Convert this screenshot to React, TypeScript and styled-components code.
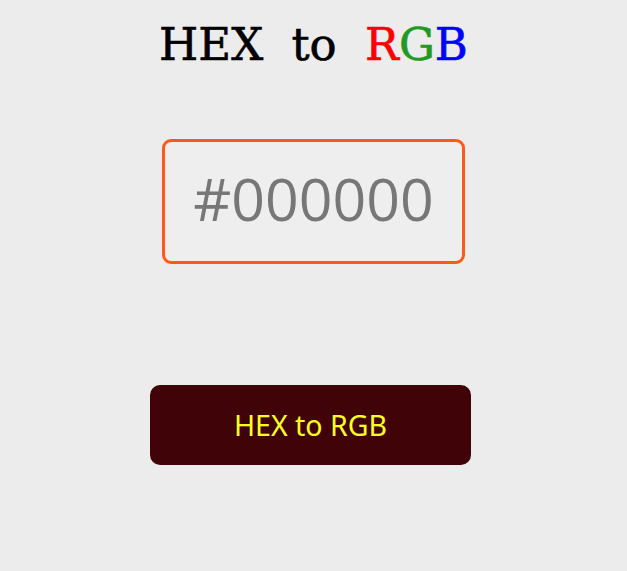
import styled, { createGlobalStyle } from "styled-components";

const GlobalStyle = createGlobalStyle`
  html, body {
    margin: 0;
    padding: 0;
    background: #ececec;
  }
`;

export default function App() {
  return (
    <>
      <GlobalStyle />
      <Wrapper>
        <Title>
          HEX to <Letter color="#ff0000">R</Letter>
          <Letter color="#229922">G</Letter>
          <Letter color="#0000ff">B</Letter>
        </Title>
        <HexInput placeholder="#000000" />
        <ConvertButton>HEX to RGB</ConvertButton>
      </Wrapper>
    </>
  );
}

const Wrapper = styled.div`
  width: 627px;
  height: 571px;
  display: flex;
  flex-direction: column;
  align-items: center;
  padding-top: 14px;
  box-sizing: border-box;
`;

const Title = styled.h1`
  margin: 0 0 0 0;
  font-family: "DejaVu Serif", serif;
  font-weight: normal;
  font-size: 45px;
  line-height: 62px;
  word-spacing: 14px;
  -webkit-text-stroke: 0.6px currentColor;
  color: #000;
`;

const Letter = styled.span<{ color: string }>`
  color: ${(p) => p.color};
`;

const HexInput = styled.input`
  margin-top: 63px;
  width: 303px;
  height: 125px;
  box-sizing: border-box;
  border: 3px solid #ff5a14;
  border-radius: 9px;
  background: #eeeeee;
  outline: none;
  text-align: center;
  font-family: "Open Sans", sans-serif;
  font-size: 59px;
  color: #777;
  padding: 0 0 8px 0;
  &::placeholder {
    color: #777;
  }
`;

const ConvertButton = styled.button`
  margin-top: 121px;
  margin-left: -6px;
  width: 321px;
  height: 80px;
  border: none;
  border-radius: 10px;
  background: #400408;
  color: #ffff1a;
  font-family: "Noto Sans", sans-serif;
  font-size: 28.5px;
  cursor: pointer;
`;
